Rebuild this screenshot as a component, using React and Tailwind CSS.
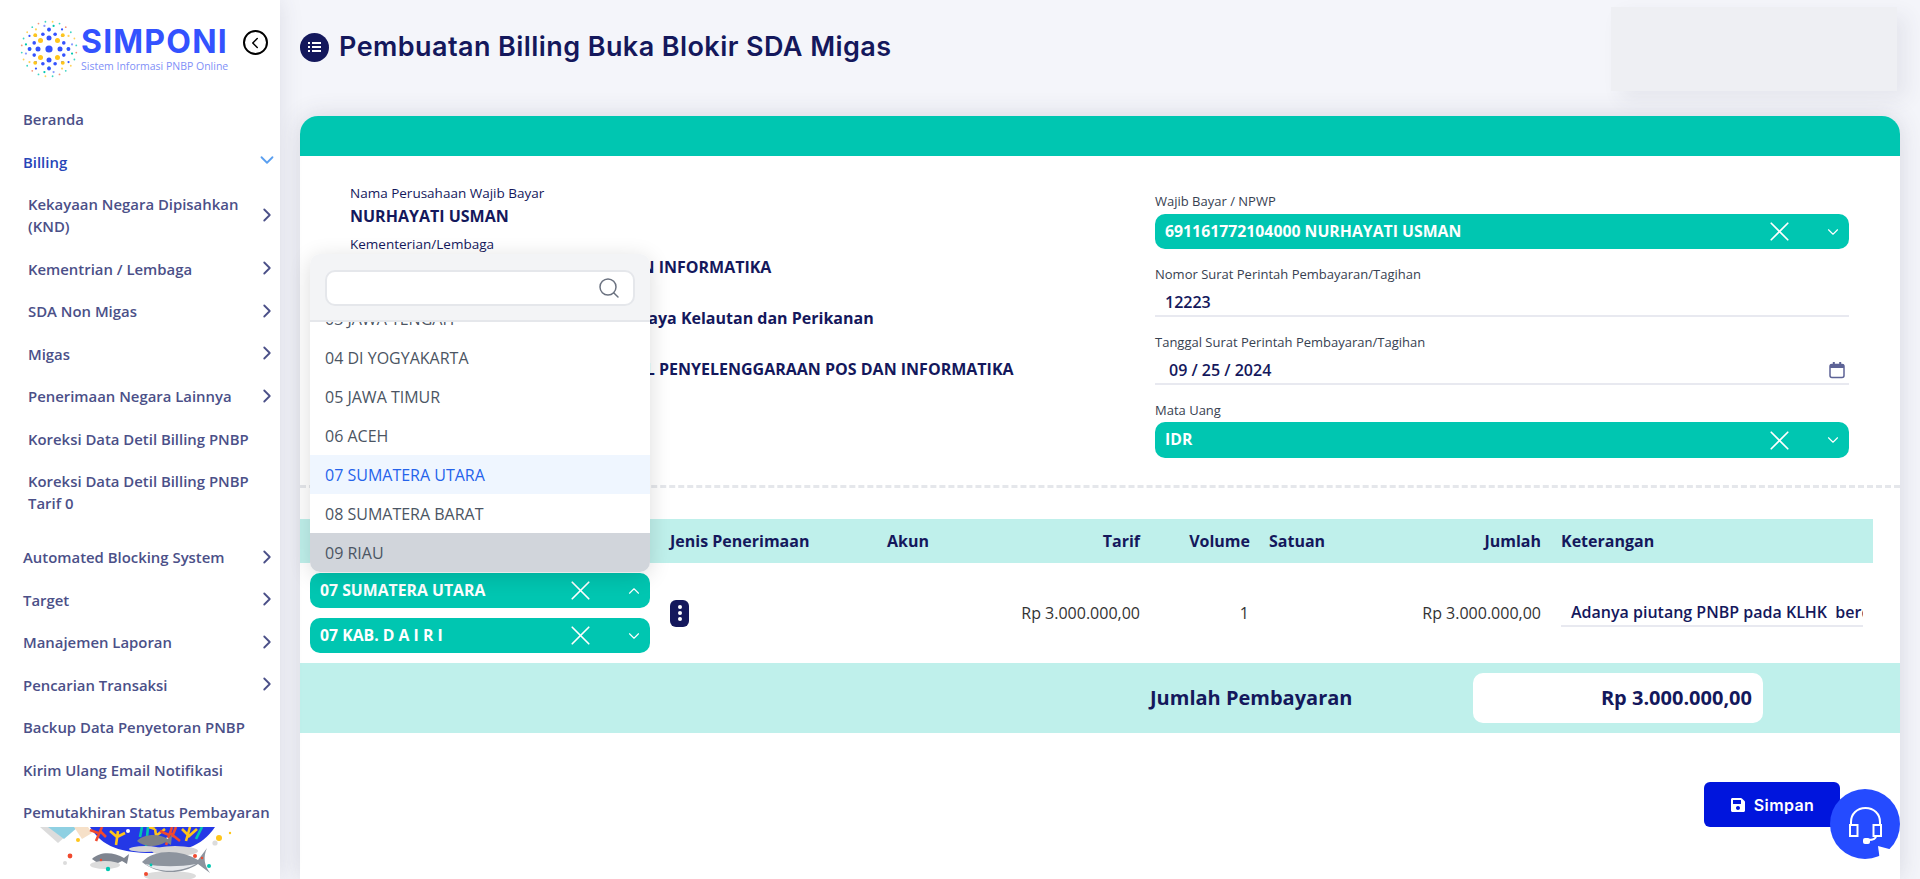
import React from "react";
import { ChevronRight, ChevronDown, ChevronUp, ChevronLeft, X, Search } from "lucide-react";
import { FaSave } from "react-icons/fa";

function Logo() {
  const rings = [
    { r: 11, n: 4, o: 0, s: 2.5, c: ["#3352ff"] },
    { r: 12, n: 4, o: 45, s: 2.5, c: ["#ffc61a"] },
    { r: 16, n: 8, o: 22.5, s: 1.8, c: ["#3352ff"] },
    { r: 19, n: 8, o: 0, s: 1.4, c: ["#00c7b1", "#3352ff"] },
    { r: 19.5, n: 8, o: 45, s: 1.9, c: ["#ffc61a", "#3352ff"] },
    { r: 23.5, n: 16, o: 11.25, s: 1.1, c: ["#00c7b1", "#3352ff", "#ffd35c", "#8a9bff"] },
    { r: 27.5, n: 24, o: 7.5, s: 0.9, c: ["#f4957a", "#3fd4c4", "#ffd35c", "#3fd4c4"] },
  ];
  return (
    <svg width="58" height="58" viewBox="0 0 58 58" className="shrink-0">
      <circle cx="29" cy="29" r="3.6" fill="#3352ff" />
      {rings.map((ring, i) =>
        Array.from({ length: ring.n }).map((_, k) => {
          const a = ((ring.o + (k * 360) / ring.n) * Math.PI) / 180;
          return (
            <circle
              key={i + "-" + k}
              cx={29 + ring.r * Math.cos(a)}
              cy={29 + ring.r * Math.sin(a)}
              r={ring.s}
              fill={ring.c[k % ring.c.length]}
            />
          );
        })
      )}
    </svg>
  );
}

function MenuItem({ label, chevron, sub, active, open, twoLine }) {
  return (
    <div
      className={`flex items-center justify-between ${twoLine ? "h-[64.5px]" : "h-[42.5px]"} ${sub ? "pl-[28px]" : "pl-[23px]"} pr-[2px]`}
    >
      <span className={`font-semibold text-[14.9px] leading-[22px] ${active ? "text-[#2745b8]" : "text-[#4b5088]"} ${twoLine ? "w-[225px]" : "whitespace-nowrap"}`}>
        {label}
      </span>
      {chevron && (
        open ? (
          <ChevronDown size={22} strokeWidth={2} className="text-[#5a9ff0] shrink-0 -mt-[3px]" />
        ) : (
          <ChevronRight size={22} strokeWidth={2} className="text-[#4b5088] shrink-0 -mt-[1px] ml-auto" />
        )
      )}
    </div>
  );
}

function Illustration() {
  return (
    <svg width="210" height="52" viewBox="0 0 210 52" className="ml-[30px] shrink-0">
      <polygon points="10,0 28,16 46,0" fill="#dcdcdc" />
      <polygon points="18,0 34,12 48,0" fill="#8fd0e2" />
      <polygon points="44,0 52,12 62,6 58,0" fill="#f6e0c8" />
      <path d="M60 0 H185 C172 20 150 26 122 26 C92 26 72 20 60 0Z" fill="#2438e6" />
      <g fill="none" strokeWidth="2.6">
        <path d="M72 0 L66 14 M68 6 L60 3 M70 4 L76 10" stroke="#f0492e" />
        <path d="M88 4 L86 18 M87 10 L80 4 M87 10 L95 6" stroke="#ffc61a" />
        <path d="M112 0 L110 10 M118 0 L116 20" stroke="#00c7b1" />
        <path d="M125 2 L127 14 M125 2 L119 0 M127 8 L135 2" stroke="#ffc61a" />
        <path d="M142 0 L136 18 M139 8 L130 4 M140 6 L150 14 M146 0 L142 10" stroke="#f0492e" />
        <path d="M160 0 L156 14 M152 2 L158 8 M167 2 L158 10" stroke="#ffc61a" />
        <path d="M172 0 L166 12" stroke="#00c7b1" />
      </g>
      <circle cx="98" cy="4" r="2" fill="#ffffff" />
      <circle cx="137" cy="12" r="1.6" fill="#ffffff" />
      <ellipse cx="145" cy="24" rx="23" ry="5" fill="#d4d4d4" />
      <ellipse cx="115" cy="22" rx="16" ry="3" fill="#d4d4d4" />
      <path d="M107 14 C114 7 128 6 138 12 L142 8 L141 18 L136 15 C126 21 114 20 107 14Z" fill="#7d8187" />
      <path d="M62 32 C70 24 84 25 94 31 L99 27 L97 37 L92 34 C82 40 70 39 62 32Z" fill="#7f8590" />
      <ellipse cx="75" cy="38" rx="15" ry="4" fill="#dcdcdc" />
      <ellipse cx="140" cy="49" rx="26" ry="5" fill="#dcdcdc" />
      <path d="M112 35 C124 22 150 22 168 33 L177 21 C173 30 174 38 180 46 L168 37 C150 49 126 47 112 35Z" fill="#8d949e" />
      <path d="M115 37 C128 46 150 46 166 37 C150 40 130 40 115 37Z" fill="#e6e8ec" />
      <circle cx="40" cy="29" r="2.4" fill="#f0492e" />
      <circle cx="71" cy="33" r="1.2" fill="#f0492e" />
      <circle cx="48" cy="13" r="2" fill="#ffc61a" />
      <circle cx="35" cy="36" r="2" fill="#dcdcdc" />
      <circle cx="78" cy="42" r="2.2" fill="#00c7b1" />
      <circle cx="116" cy="47" r="2" fill="#f0492e" />
      <circle cx="121" cy="38" r="1.4" fill="#00c7b1" />
      <circle cx="165" cy="29" r="2" fill="#f0492e" />
      <circle cx="172" cy="31" r="1.2" fill="#f0492e" />
      <circle cx="179" cy="39" r="2" fill="#00c7b1" />
      <circle cx="189" cy="11" r="3" fill="#ffc61a" />
      <circle cx="185" cy="16" r="2.6" fill="#dcdcdc" />
      <circle cx="200" cy="6" r="1.2" fill="#ffc61a" />
    </svg>
  );
}

function Sidebar() {
  return (
    <aside className="w-[280px] shrink-0 h-[879px] bg-white flex flex-col relative z-10 shadow-[0_0_22px_rgba(60,60,90,0.13)] overflow-hidden">
      <div className="h-[98px] shrink-0 flex items-start pl-[20px] pt-[20px]">
        <Logo />
        <div className="ml-[3px] mt-[6px] w-[150px]">
          <div className="font-['Inter'] font-bold text-[32px] leading-[32px] text-[#3352ff] tracking-[1.2px]">SIMPONI</div>
          <div className="text-[10.5px] leading-[15px] mt-[1px] text-[#7f90f7] whitespace-nowrap">Sistem Informasi PNBP Online</div>
        </div>
        <div className="ml-[12px] mt-[10px] w-[25px] h-[25px] rounded-full border-2 border-black flex items-center justify-center">
          <ChevronLeft size={18} strokeWidth={2} className="text-black -ml-[2px]" />
        </div>
      </div>
      <nav className="h-[729px] shrink-0 overflow-hidden">
        <MenuItem label="Beranda" />
        <MenuItem label="Billing" chevron open active />
        <div className="pb-[11.5px]">
          <MenuItem sub twoLine chevron label="Kekayaan Negara Dipisahkan (KND)" />
          <MenuItem sub chevron label="Kementrian / Lembaga" />
          <MenuItem sub chevron label="SDA Non Migas" />
          <MenuItem sub chevron label="Migas" />
          <MenuItem sub chevron label="Penerimaan Negara Lainnya" />
          <MenuItem sub label="Koreksi Data Detil Billing PNBP" />
          <MenuItem sub twoLine label="Koreksi Data Detil Billing PNBP Tarif 0" />
        </div>
        <MenuItem chevron label="Automated Blocking System" />
        <MenuItem chevron label="Target" />
        <MenuItem chevron label="Manajemen Laporan" />
        <MenuItem chevron label="Pencarian Transaksi" />
        <MenuItem label="Backup Data Penyetoran PNBP" />
        <MenuItem label="Kirim Ulang Email Notifikasi" />
        <MenuItem label="Pemutakhiran Status Pembayaran" />
      </nav>
      <Illustration />
    </aside>
  );
}

function TealSelect({ value, open, className = "" }) {
  return (
    <div className={`h-[35px] rounded-[10px] bg-[#00c6b1] flex items-center pl-[10px] pr-[7px] text-white font-bold text-[15.8px] ${className}`}>
      <span className="flex-1 whitespace-nowrap">{value}</span>
      <X size={33} strokeWidth={1.25} className="mr-[28px] shrink-0" />
      {open ? <ChevronUp size={18} strokeWidth={1.5} className="shrink-0" /> : <ChevronDown size={18} strokeWidth={1.5} className="shrink-0" />}
    </div>
  );
}

function InfoGroup({ label, value }) {
  return (
    <div className="h-[51px] whitespace-nowrap">
      <div className="text-[13.5px] leading-[18px] text-[#14185c] pt-[1px]">{label}</div>
      <div className="text-[16px] leading-[22px] mt-[3px] font-bold text-[#14185c]">{value}</div>
    </div>
  );
}

function CalendarGlyph() {
  return (
    <svg width="18" height="18" viewBox="0 0 18 18" className="text-[#5d6396]">
      <rect x="2" y="3.5" width="14" height="13" rx="2" fill="none" stroke="currentColor" strokeWidth="1.5" />
      <rect x="2" y="3.5" width="14" height="3.5" fill="currentColor" />
      <rect x="4.8" y="1" width="2" height="3" fill="currentColor" />
      <rect x="11.2" y="1" width="2" height="3" fill="currentColor" />
    </svg>
  );
}

function FormRight() {
  const label = "text-[13px] leading-[18px] text-[#374151]";
  const line = "h-[34px] border-b-2 border-[#e8e9f0] text-[16px] font-semibold text-[#14185c] flex items-center pt-[6px]";
  return (
    <div className="w-[694px] pt-[36px] flex flex-col">
      <div className={label}>Wajib Bayar / NPWP</div>
      <TealSelect value="691161772104000 NURHAYATI USMAN" className="mt-[4px]" />
      <div className={`${label} mt-[16px]`}>Nomor Surat Perintah Pembayaran/Tagihan</div>
      <div className={`${line} pl-[10px]`}>12223</div>
      <div className={`${label} mt-[16px]`}>Tanggal Surat Perintah Pembayaran/Tagihan</div>
      <div className={`${line} pl-[14px] justify-between pr-[3px]`}>
        <span>09 / 25 / 2024</span>
        <CalendarGlyph />
      </div>
      <div className={`${label} mt-[16px]`}>Mata Uang</div>
      <TealSelect value="IDR" className="mt-[3px] h-[36px]" />
    </div>
  );
}

function Dropdown() {
  const items = [
    { t: "03 JAWA TENGAH" },
    { t: "04 DI YOGYAKARTA" },
    { t: "05 JAWA TIMUR" },
    { t: "06 ACEH" },
    { t: "07 SUMATERA UTARA", c: "bg-[#eff6ff] text-[#2563eb]" },
    { t: "08 SUMATERA BARAT" },
    { t: "09 RIAU", c: "bg-[#d1d5db] text-[#4b5563]" },
  ];
  return (
    <div className="absolute left-[10px] top-[-319px] w-[340px] h-[318px] rounded-[10px] overflow-hidden flex flex-col bg-white z-20 shadow-[0_4px_22px_rgba(0,0,0,0.14)]">
      <div className="h-[68px] shrink-0 bg-[#f3f4f6] border-b-2 border-[#e5e7eb] pl-[15px] pr-[15px] pt-[16px]">
        <div className="h-[36px] rounded-[10px] bg-white border-2 border-[#e5e7eb] flex items-center justify-end pr-[12px]">
          <Search size={24} strokeWidth={1.5} className="text-[#6b7280]" />
        </div>
      </div>
      <div className="flex-1 min-h-0 flex flex-col justify-end overflow-hidden">
        {items.map((it) => (
          <div key={it.t} className={`h-[39px] shrink-0 flex items-center pl-[15px] text-[16px] ${it.c || "text-[#4b5563]"}`}>
            {it.t}
          </div>
        ))}
      </div>
    </div>
  );
}

const gridCols = "grid grid-cols-[360px_217px_123px_150px_110px_140px_151px_322px]";

function BillingTable() {
  const th = "font-bold text-[16px] text-[#14185c]";
  return (
    <div>
      <div className={`${gridCols} w-[1573px] h-[44px] items-center bg-[#bff0eb] ${th}`}>
        <div />
        <div className="pl-[10px]">Jenis Penerimaan</div>
        <div className="pl-[10px]">Akun</div>
        <div className="text-right pr-[10px]">Tarif</div>
        <div className="text-right pr-[10px]">Volume</div>
        <div className="pl-[9px]">Satuan</div>
        <div className="text-right pr-[10px]">Jumlah</div>
        <div className="pl-[10px]">Keterangan</div>
      </div>
      <div className={`${gridCols} w-[1573px] h-[100px] items-center text-[16px] text-[#333333]`}>
        <div className="relative pl-[10px] pr-[10px] flex flex-col gap-[10px]">
          <Dropdown />
          <TealSelect value="07 SUMATERA UTARA" open />
          <TealSelect value="07 KAB. D A I R I" />
        </div>
        <div className="pl-[10px]">
          <div className="w-[19px] h-[27px] rounded-[6px] bg-[#14185c] flex flex-col items-center justify-center gap-[2px]">
            <span className="w-[4px] h-[4px] rounded-full bg-white" />
            <span className="w-[4px] h-[4px] rounded-full bg-white" />
            <span className="w-[4px] h-[4px] rounded-full bg-white" />
          </div>
        </div>
        <div />
        <div className="text-right pr-[10px]">Rp 3.000.000,00</div>
        <div className="text-right pr-[11px]">1</div>
        <div />
        <div className="text-right pr-[10px]">Rp 3.000.000,00</div>
        <div className="pl-[10px] pr-[10px]">
          <div className="h-[28px] border-b-2 border-[#e8e9f0] pl-[10px] overflow-hidden whitespace-pre font-semibold text-[#14185c] leading-[26px]">
            Adanya piutang PNBP pada KLHK  berdasarkan
          </div>
        </div>
      </div>
      <div className="h-[70px] bg-[#bff0eb] flex items-center pl-[850px]">
        <span className="font-bold text-[20px] text-[#14185c] whitespace-nowrap">Jumlah Pembayaran</span>
        <div className="ml-auto mr-[137px] w-[290px] h-[50px] bg-white rounded-[10px] flex items-center justify-end pr-[11px] font-bold text-[20px] text-[#14185c]">
          Rp 3.000.000,00
        </div>
      </div>
    </div>
  );
}

function ChatButton() {
  return (
    <svg width="70" height="70" viewBox="0 0 70 70" className="fixed left-[1830px] top-[789px] z-30">
      <circle cx="35" cy="35" r="35" fill="#254bff" />
      <polygon points="48,57 61,60.5 72,72 50,72" fill="#ffffff" />
      <path d="M21 36 V33 C21 25 27 19 35.5 19 C44 19 50 25 50 33 V36" fill="none" stroke="#fff" strokeWidth="2" />
      <rect x="20" y="36" width="7.5" height="11" fill="none" stroke="#fff" strokeWidth="2" />
      <rect x="43.5" y="36" width="7.5" height="11" fill="none" stroke="#fff" strokeWidth="2" />
      <path d="M46 47 C46 50 43 51 38 51" fill="none" stroke="#fff" strokeWidth="2" />
      <rect x="33" y="49" width="7" height="6" rx="2" fill="#fff" />
    </svg>
  );
}

export default function App() {
  return (
    <div className="flex h-[879px] w-[1920px] overflow-hidden bg-[#f4f5fa] font-['Open_Sans',sans-serif]">
      <Sidebar />
      <main className="flex-1 min-w-0 flex flex-col px-[20px] h-[879px]">
        <header className="h-[116px] shrink-0 flex items-start">
          <div className="mt-[32px] flex items-center">
            <div className="w-[29px] h-[29px] rounded-full bg-[#14185c] flex flex-col items-center justify-center gap-[2px]">
              {[0, 1, 2].map((i) => (
                <div key={i} className="flex gap-[1.5px]">
                  <span className="w-[2px] h-[2px] bg-white" />
                  <span className="w-[9px] h-[2px] bg-white" />
                </div>
              ))}
            </div>
            <h1 className="ml-[10px] font-['Inter'] font-semibold text-[27px] leading-[30px] tracking-[0.42px] text-[#14185c] whitespace-nowrap">
              Pembuatan Billing Buka Blokir SDA Migas
            </h1>
          </div>
          <div className="ml-auto mr-[3px] mt-[7px] w-[286px] h-[84px] bg-[#eeeff3] shadow-[10px_8px_18px_rgba(60,60,90,0.08)]" />
        </header>
        <section className="flex-1 min-h-0 bg-white rounded-t-[18px] shadow-[0_0_24px_rgba(60,60,90,0.16)] flex flex-col relative">
          <div className="h-[40px] shrink-0 bg-[#00c6b1] rounded-t-[18px]" />
          <div className="h-[329px] shrink-0 flex justify-between pr-[51px]">
            <div className="pl-[50px] pt-[27px]">
              <InfoGroup label="Nama Perusahaan Wajib Bayar" value="NURHAYATI USMAN" />
              <InfoGroup label="Kementerian/Lembaga" value="059 - KEMENTERIAN KOMUNIKASI DAN INFORMATIKA" />
              <InfoGroup label="Unit Eselon I" value="5 PNBP Perizinan Berusaha Sumber Daya Kelautan dan Perikanan" />
              <InfoGroup label="Satuan Kerja" value="1 SEKRETARIAT DIREKTORAT JENDERAL PENYELENGGARAAN POS DAN INFORMATIKA" />
            </div>
            <FormRight />
          </div>
          <div className="border-t-[3px] border-dashed border-[#e5e7eb] shrink-0" />
          <div className="h-[31px] shrink-0" />
          <BillingTable />
          <div className="mt-[49px] flex justify-end pr-[60px]">
            <button className="w-[136px] h-[45px] rounded-[6px] bg-[#0015dd] text-white flex items-center justify-center gap-[8px] font-['Inter'] font-semibold text-[16px] tracking-[0.4px]">
              <FaSave size={16} />
              Simpan
            </button>
          </div>
        </section>
      </main>
      <ChatButton />
    </div>
  );
}
